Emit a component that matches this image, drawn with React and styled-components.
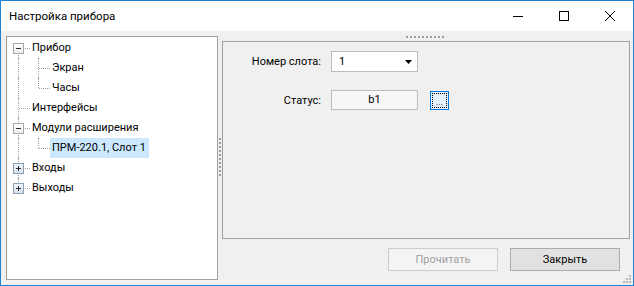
import React from "react";
import styled, { createGlobalStyle } from "styled-components";

const Global = createGlobalStyle`
  html, body { margin: 0; padding: 0; background: #ffffff; }
  body { font-family: Roboto, "Noto Sans", sans-serif; font-size: 11px; color: #000; }
  * { box-sizing: border-box; }
`;

const Window = styled.div`
  position: relative;
  width: 634px;
  height: 286px;
  border: 1px solid #1883d7;
  display: flex;
  flex-direction: column;
  background: #f0f0f0;
  overflow: hidden;
`;

const TitleBar = styled.div`
  height: 30px;
  flex: none;
  background: #ffffff;
  display: flex;
  align-items: center;
`;

const Title = styled.div`
  flex: 1;
  padding-left: 8px;
  font-size: 11.5px;
  line-height: 16px;
  color: #000;
`;

const CaptionButton = styled.div`
  width: 46px;
  height: 30px;
  display: flex;
  align-items: center;
  justify-content: center;
  color: #000;
`;

const Body = styled.div`
  flex: 1;
  display: flex;
  padding: 5px 3px 5px 5px;
  min-height: 0;
`;

const TreePanel = styled.div`
  width: 212px;
  flex: none;
  background: #ffffff;
  border: 1px solid #a0a0a0;
  padding: 1px 0 0 1px;
`;

const TreeRow = styled.div`
  height: 20px;
  display: flex;
  align-items: stretch;
`;

const Gutter = styled.div`
  position: relative;
  width: 20px;
  flex: none;
  &::before {
    content: "";
    display: ${(p) => (p.$v === "none" ? "none" : "block")};
    position: absolute;
    left: 10px;
    top: ${(p) => (p.$v === "bottom" ? "10px" : "0")};
    height: ${(p) => (p.$v === "full" ? "20px" : "10px")};
    border-left: 1px dotted #a0a0a0;
  }
  &::after {
    content: "";
    display: ${(p) => (p.$h ? "block" : "none")};
    position: absolute;
    left: 11px;
    top: 10px;
    width: 11px;
    border-top: 1px dotted #a0a0a0;
  }
`;

const Expander = styled.div`
  position: absolute;
  z-index: 1;
  left: 5px;
  top: 5px;
  width: 11px;
  height: 11px;
  border: 1px solid ${(p) => (p.$plus ? "#8e9eb1" : "#a6a6a6")};
  background: ${(p) =>
    p.$plus ? "linear-gradient(#eef4fb, #d6e3f1)" : "linear-gradient(#ffffff, #ececec)"};
  &::before {
    content: "";
    position: absolute;
    left: 2px;
    top: 4px;
    width: 5px;
    height: 1px;
    background: #2a2a2a;
  }
  &::after {
    content: "";
    display: ${(p) => (p.$plus ? "block" : "none")};
    position: absolute;
    left: 4px;
    top: 2px;
    width: 1px;
    height: 5px;
    background: #2a2a2a;
  }
`;

const NodeLabel = styled.div`
  margin-left: 2px;
  padding: 0 3px 0 2px;
  height: 20px;
  line-height: 20px;
  white-space: nowrap;
  background: ${(p) => (p.$selected ? "#cce8ff" : "transparent")};
`;

const VSplitter = styled.div`
  width: 4px;
  flex: none;
  display: flex;
  align-items: center;
  justify-content: center;
`;

const VGrip = styled.div`
  width: 2px;
  height: 38px;
  margin-top: -2px;
  background: linear-gradient(180deg, #9c9c9c 2px, transparent 2px) 0 0 / 2px 4px repeat-y;
`;

const RightColumn = styled.div`
  flex: 1;
  display: flex;
  flex-direction: column;
  min-width: 0;
`;

const HSplitter = styled.div`
  height: 5px;
  flex: none;
  display: flex;
  justify-content: center;
  padding-right: 3px;
`;

const HGrip = styled.div`
  width: 38px;
  height: 2px;
  background: linear-gradient(90deg, #9c9c9c 2px, transparent 2px) 0 0 / 4px 2px repeat-x;
`;

const SettingsPanel = styled.div`
  height: 198px;
  flex: none;
  border: 1px solid #a0a0a0;
  background: #f0f0f0;
  padding-top: 9px;
  display: grid;
  grid-template-columns: 98px 87px auto;
  grid-auto-rows: min-content;
  column-gap: 10px;
  row-gap: 18px;
  align-items: center;
  align-content: start;
`;

const FieldLabel = styled.div`
  text-align: right;
  white-space: nowrap;
`;

const Combo = styled.div`
  height: 21px;
  background: #ffffff;
  border: 1px solid #bdbdbd;
  display: flex;
  align-items: center;
  justify-content: space-between;
  padding: 0 5px 0 7px;
`;

const ReadOnlyField = styled.div`
  height: 20px;
  background: #f7f7f7;
  border: 1px solid #bdbdbd;
  text-align: center;
  line-height: 18px;
`;

const EllipsisButton = styled.div`
  width: 19px;
  height: 19px;
  margin-left: 2px;
  border: 1px solid #0078d7;
  background: #e5f1fb;
  padding: 1px;
`;

const FocusRect = styled.div`
  width: 100%;
  height: 100%;
  border: 1px dotted #000;
  display: flex;
  align-items: flex-end;
  justify-content: center;
  font-size: 9px;
  line-height: 9px;
  color: #1a1a5a;
  letter-spacing: 0;
`;

const ButtonRow = styled.div`
  display: flex;
  justify-content: flex-end;
  gap: 12px;
  padding: 9px 10px 0 0;
`;

const PushButton = styled.div`
  width: 110px;
  height: 23px;
  display: flex;
  align-items: center;
  justify-content: center;
  border: 1px solid ${(p) => (p.$disabled ? "#cccccc" : "#adadad")};
  background: ${(p) => (p.$disabled ? "#f4f4f4" : "#e1e1e1")};
  color: ${(p) => (p.$disabled ? "#a0a0a0" : "#000")};
`;

const SizeGrip = styled.svg`
  position: absolute;
  right: 1px;
  bottom: 1px;
`;

const rows = [
  { label: "Прибор", cells: [{ v: "bottom", h: true, box: "minus" }] },
  { label: "Экран", cells: [{ v: "full" }, { v: "full", h: true }] },
  { label: "Часы", cells: [{ v: "full" }, { v: "top", h: true }] },
  { label: "Интерфейсы", cells: [{ v: "full", h: true }] },
  { label: "Модули расширения", cells: [{ v: "full", h: true, box: "minus" }] },
  { label: "ПРМ-220.1, Слот 1", cells: [{ v: "full" }, { v: "top", h: true }], selected: true },
  { label: "Входы", cells: [{ v: "full", h: true, box: "plus" }] },
  { label: "Выходы", cells: [{ v: "top", h: true, box: "plus" }] },
];

export default function App() {
  return (
    <>
      <Global />
      <Window>
        <TitleBar>
          <Title>Настройка прибора</Title>
          <CaptionButton>
            <svg width="10" height="10" viewBox="0 0 10 10">
              <rect x="0" y="5" width="10" height="1" fill="#000" />
            </svg>
          </CaptionButton>
          <CaptionButton>
            <svg width="10" height="10" viewBox="0 0 10 10">
              <rect x="0.5" y="0.5" width="9" height="9" fill="none" stroke="#000" strokeWidth="1" />
            </svg>
          </CaptionButton>
          <CaptionButton>
            <svg width="10" height="10" viewBox="0 0 10 10">
              <path d="M0 0 L10 10 M10 0 L0 10" stroke="#000" strokeWidth="1" />
            </svg>
          </CaptionButton>
        </TitleBar>
        <Body>
          <TreePanel>
            {rows.map((r) => (
              <TreeRow key={r.label}>
                {r.cells.map((c, i) => (
                  <Gutter key={i} $v={c.v} $h={c.h}>
                    {c.box && <Expander $plus={c.box === "plus"} />}
                  </Gutter>
                ))}
                <NodeLabel $selected={r.selected}>{r.label}</NodeLabel>
              </TreeRow>
            ))}
          </TreePanel>
          <VSplitter>
            <VGrip />
          </VSplitter>
          <RightColumn>
            <HSplitter>
              <HGrip />
            </HSplitter>
            <SettingsPanel>
              <FieldLabel>Номер слота:</FieldLabel>
              <Combo>
                <span>1</span>
                <svg width="7" height="4" viewBox="0 0 7 4">
                  <path d="M0 0 H7 L3.5 4 Z" fill="#000" />
                </svg>
              </Combo>
              <div />
              <FieldLabel>Статус:</FieldLabel>
              <ReadOnlyField>b1</ReadOnlyField>
              <EllipsisButton>
                <FocusRect>...</FocusRect>
              </EllipsisButton>
            </SettingsPanel>
            <ButtonRow>
              <PushButton $disabled>Прочитать</PushButton>
              <PushButton>Закрыть</PushButton>
            </ButtonRow>
          </RightColumn>
        </Body>
        <SizeGrip width="10" height="10" viewBox="0 0 10 10">
          <g fill="#b8b8b8">
            <rect x="7" y="1" width="2" height="2" />
            <rect x="4" y="4" width="2" height="2" />
            <rect x="7" y="4" width="2" height="2" />
            <rect x="1" y="7" width="2" height="2" />
            <rect x="4" y="7" width="2" height="2" />
            <rect x="7" y="7" width="2" height="2" />
          </g>
        </SizeGrip>
      </Window>
    </>
  );
}
